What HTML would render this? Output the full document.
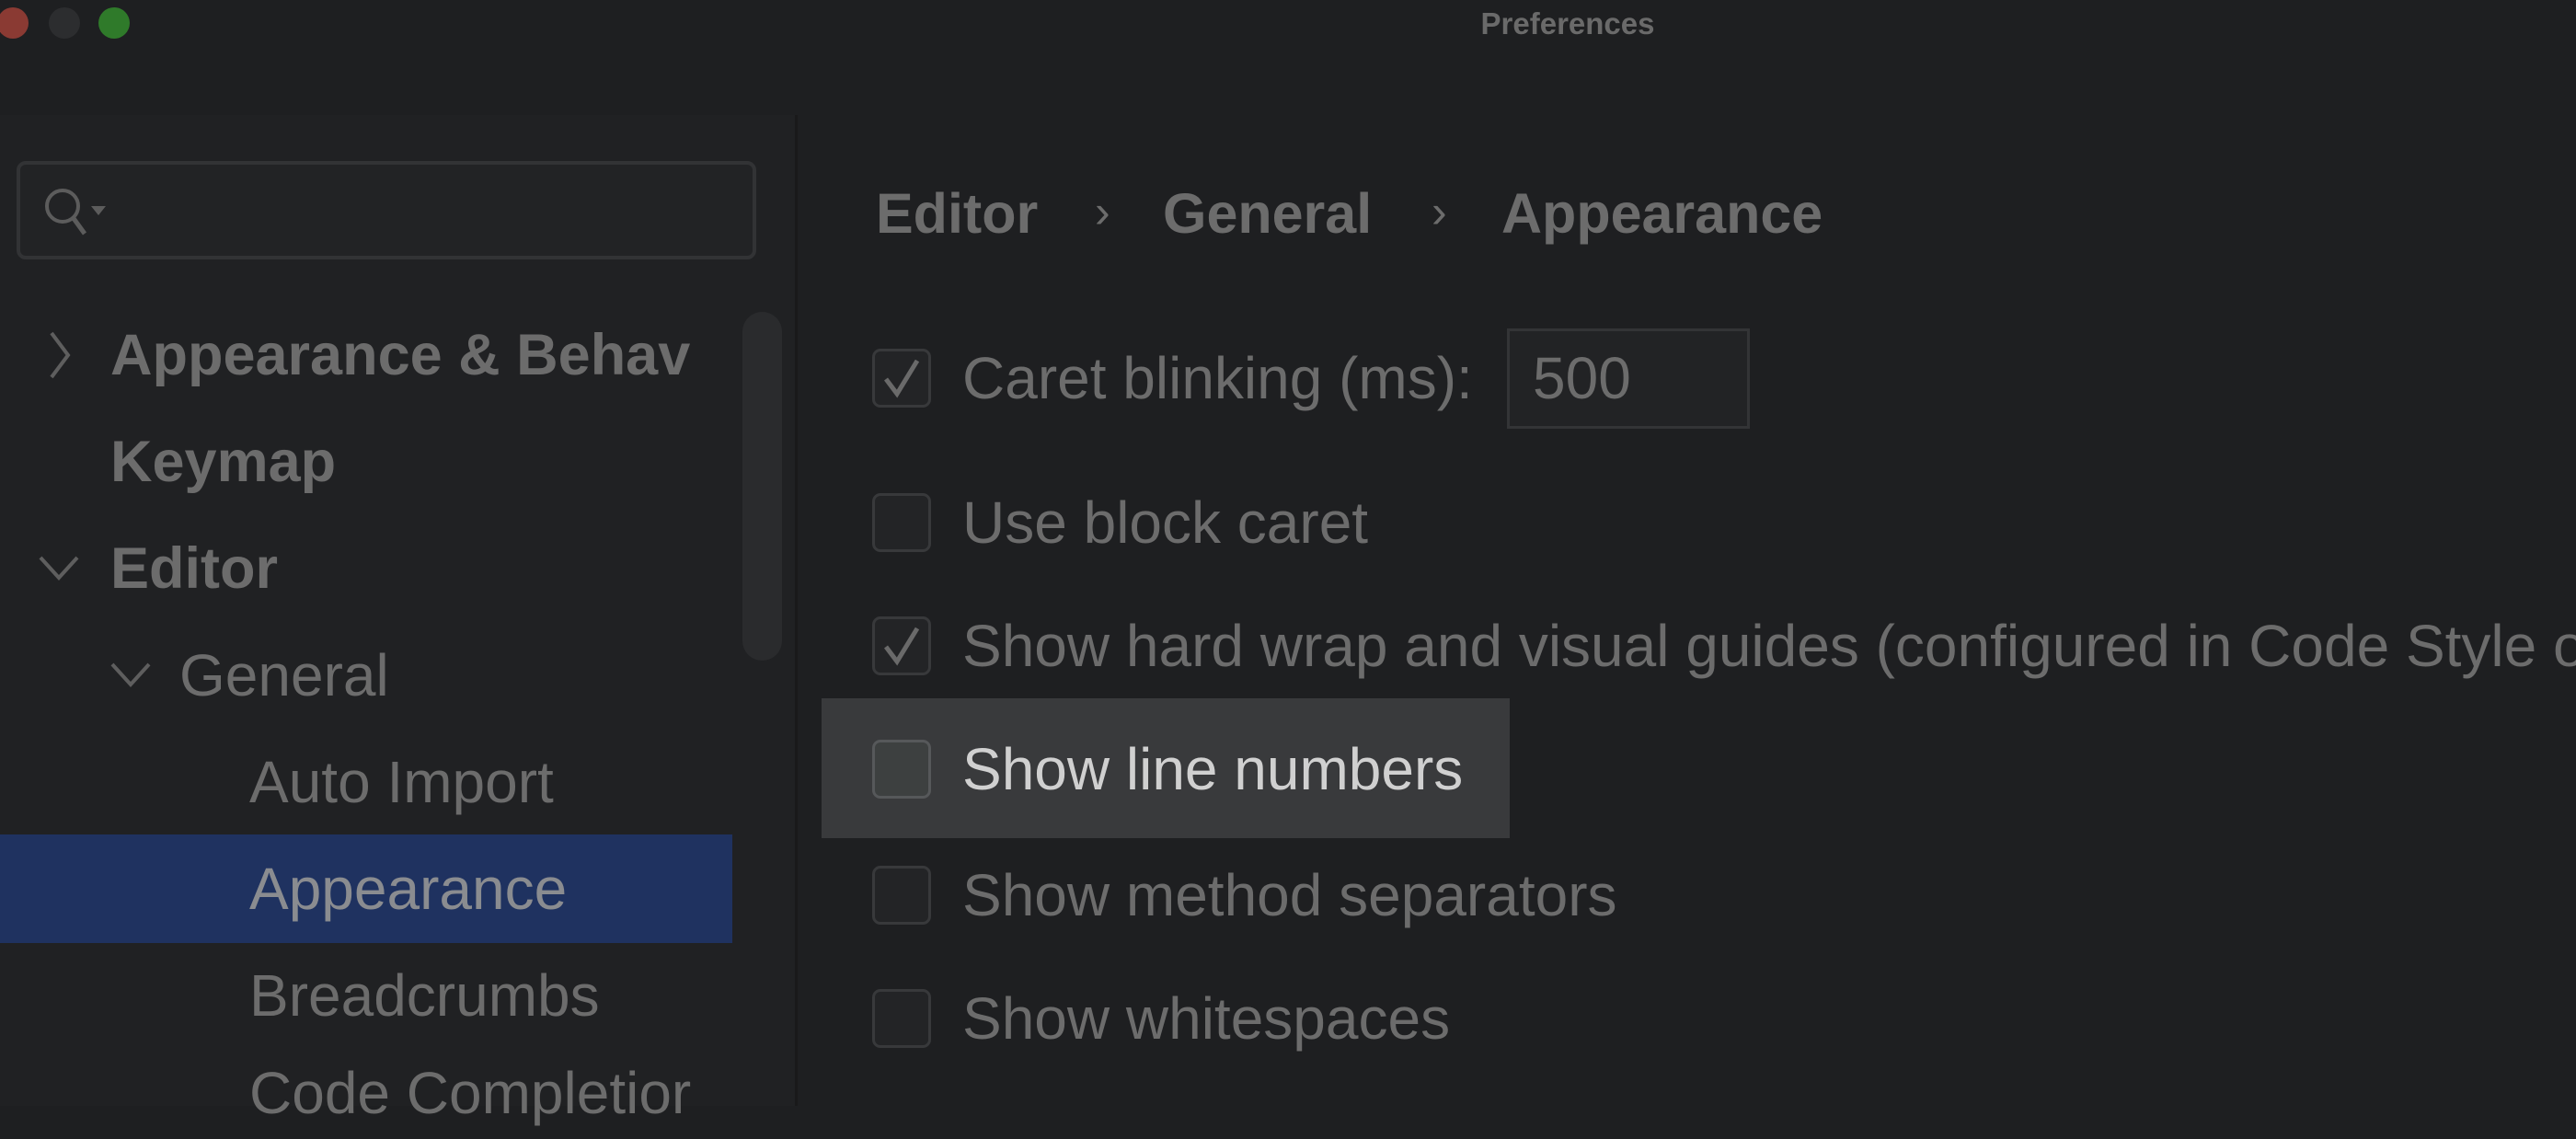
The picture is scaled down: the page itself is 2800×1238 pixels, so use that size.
<!DOCTYPE html>
<html><head><meta charset="utf-8"><style>
*{margin:0;padding:0;box-sizing:border-box}
body{width:2800px;height:1202px;background:#1e1f21;overflow:hidden;position:relative;font-family:"Liberation Sans",sans-serif;color:#6c6c6c}
.a{position:absolute;white-space:nowrap}
.t{height:100px;line-height:100px;font-size:64px}
.b{font-weight:bold}
.dot{position:absolute;width:34px;height:34px;border-radius:50%;top:8px}
.cb{position:absolute;left:948px;width:64px;height:64px;border:3px solid #38393b;border-radius:9px;background:#232426}
.ck{position:absolute;left:8px;top:6px}
</style></head><body>
<div class="dot" style="left:-3px;background:#8a3a33"></div>
<div class="dot" style="left:53px;background:#2c2d2f"></div>
<div class="dot" style="left:107px;background:#2f7a2a"></div>
<div class="a b" style="left:1600px;top:6px;width:208px;text-align:center;font-size:33px;line-height:40px;color:#6a6a6a">Preferences</div>

<div class="a" style="left:0;top:125px;width:864px;height:1077px;background:#202123"></div>
<div class="a" style="left:864px;top:125px;width:3px;height:1077px;background:#19191a"></div>

<div class="a" style="left:18px;top:175px;width:804px;height:107px;border:4px solid #323335;border-radius:10px;background:#222325"></div>
<svg class="a" style="left:44px;top:198px" width="80" height="64" viewBox="0 0 80 64"><circle cx="24" cy="26" r="17" fill="none" stroke="#5c5c5c" stroke-width="4"/><path d="M35 38 L48 56" stroke="#5c5c5c" stroke-width="5"/><path d="M55 26 L71 26 L63 36Z" fill="#5c5c5c"/></svg>

<div class="a" style="left:807px;top:339px;width:43px;height:379px;border-radius:22px;background:#2a2b2d"></div>

<div class="a" style="left:0;top:907px;width:796px;height:118px;background:#1f3260"></div>

<svg class="a" style="left:50px;top:356px" width="30" height="60"><path d="M6 6 L24 30 L6 54" fill="none" stroke="#5e5e5e" stroke-width="4"/></svg>
<div class="a t b" style="left:120px;top:336px;font-size:63px">Appearance &amp; Behav</div>
<div class="a t b" style="left:120px;top:452px;font-size:63px">Keymap</div>
<svg class="a" style="left:40px;top:600px" width="50" height="36"><path d="M4 6 L24 28 L44 6" fill="none" stroke="#5e5e5e" stroke-width="4"/></svg>
<div class="a t b" style="left:120px;top:568px;font-size:63px">Editor</div>
<svg class="a" style="left:118px;top:716px" width="50" height="36"><path d="M4 6 L24 28 L44 6" fill="none" stroke="#5e5e5e" stroke-width="4"/></svg>
<div class="a t" style="left:195px;top:684px">General</div>
<div class="a t" style="left:271px;top:800px">Auto Import</div>
<div class="a t" style="left:271px;top:916px;color:#8a8c90">Appearance</div>
<div class="a t" style="left:271px;top:1032px">Breadcrumbs</div>
<div class="a t" style="left:271px;top:1138px">Code Completior</div>

<div class="a t b" style="left:952px;top:182px;font-size:61px">Editor</div>
<div class="a t" style="left:1190px;top:180px;font-size:50px">›</div>
<div class="a t b" style="left:1264px;top:182px;font-size:61px">General</div>
<div class="a t" style="left:1556px;top:180px;font-size:50px">›</div>
<div class="a t b" style="left:1632px;top:182px;font-size:61px">Appearance</div>

<div class="a" style="left:893px;top:759px;width:748px;height:152px;background:#393a3c"></div>

<div class="cb" style="top:379px"><svg class="ck" width="44" height="48"><path d="M4 24 L16 40 L38 4" fill="none" stroke="#6a6a6a" stroke-width="5"/></svg></div>
<div class="a t" style="left:1046px;top:361px">Caret blinking (ms):</div>
<div class="a" style="left:1638px;top:357px;width:264px;height:109px;border:3px solid #333436;background:#222325"></div>
<div class="a t" style="left:1666px;top:361px">500</div>

<div class="cb" style="top:536px"></div>
<div class="a t" style="left:1046px;top:518px">Use block caret</div>

<div class="cb" style="top:670px"><svg class="ck" width="44" height="48"><path d="M4 24 L16 40 L38 4" fill="none" stroke="#6a6a6a" stroke-width="5"/></svg></div>
<div class="a t" style="left:1046px;top:652px">Show hard wrap and visual guides (configured in Code Style o</div>

<div class="cb" style="top:804px;background:#3d4040;border-color:#56585a"></div>
<div class="a t" style="left:1046px;top:786px;color:#d0d0d0">Show line numbers</div>

<div class="cb" style="top:941px"></div>
<div class="a t" style="left:1046px;top:923px">Show method separators</div>

<div class="cb" style="top:1075px"></div>
<div class="a t" style="left:1046px;top:1057px">Show whitespaces</div>
</body></html>
